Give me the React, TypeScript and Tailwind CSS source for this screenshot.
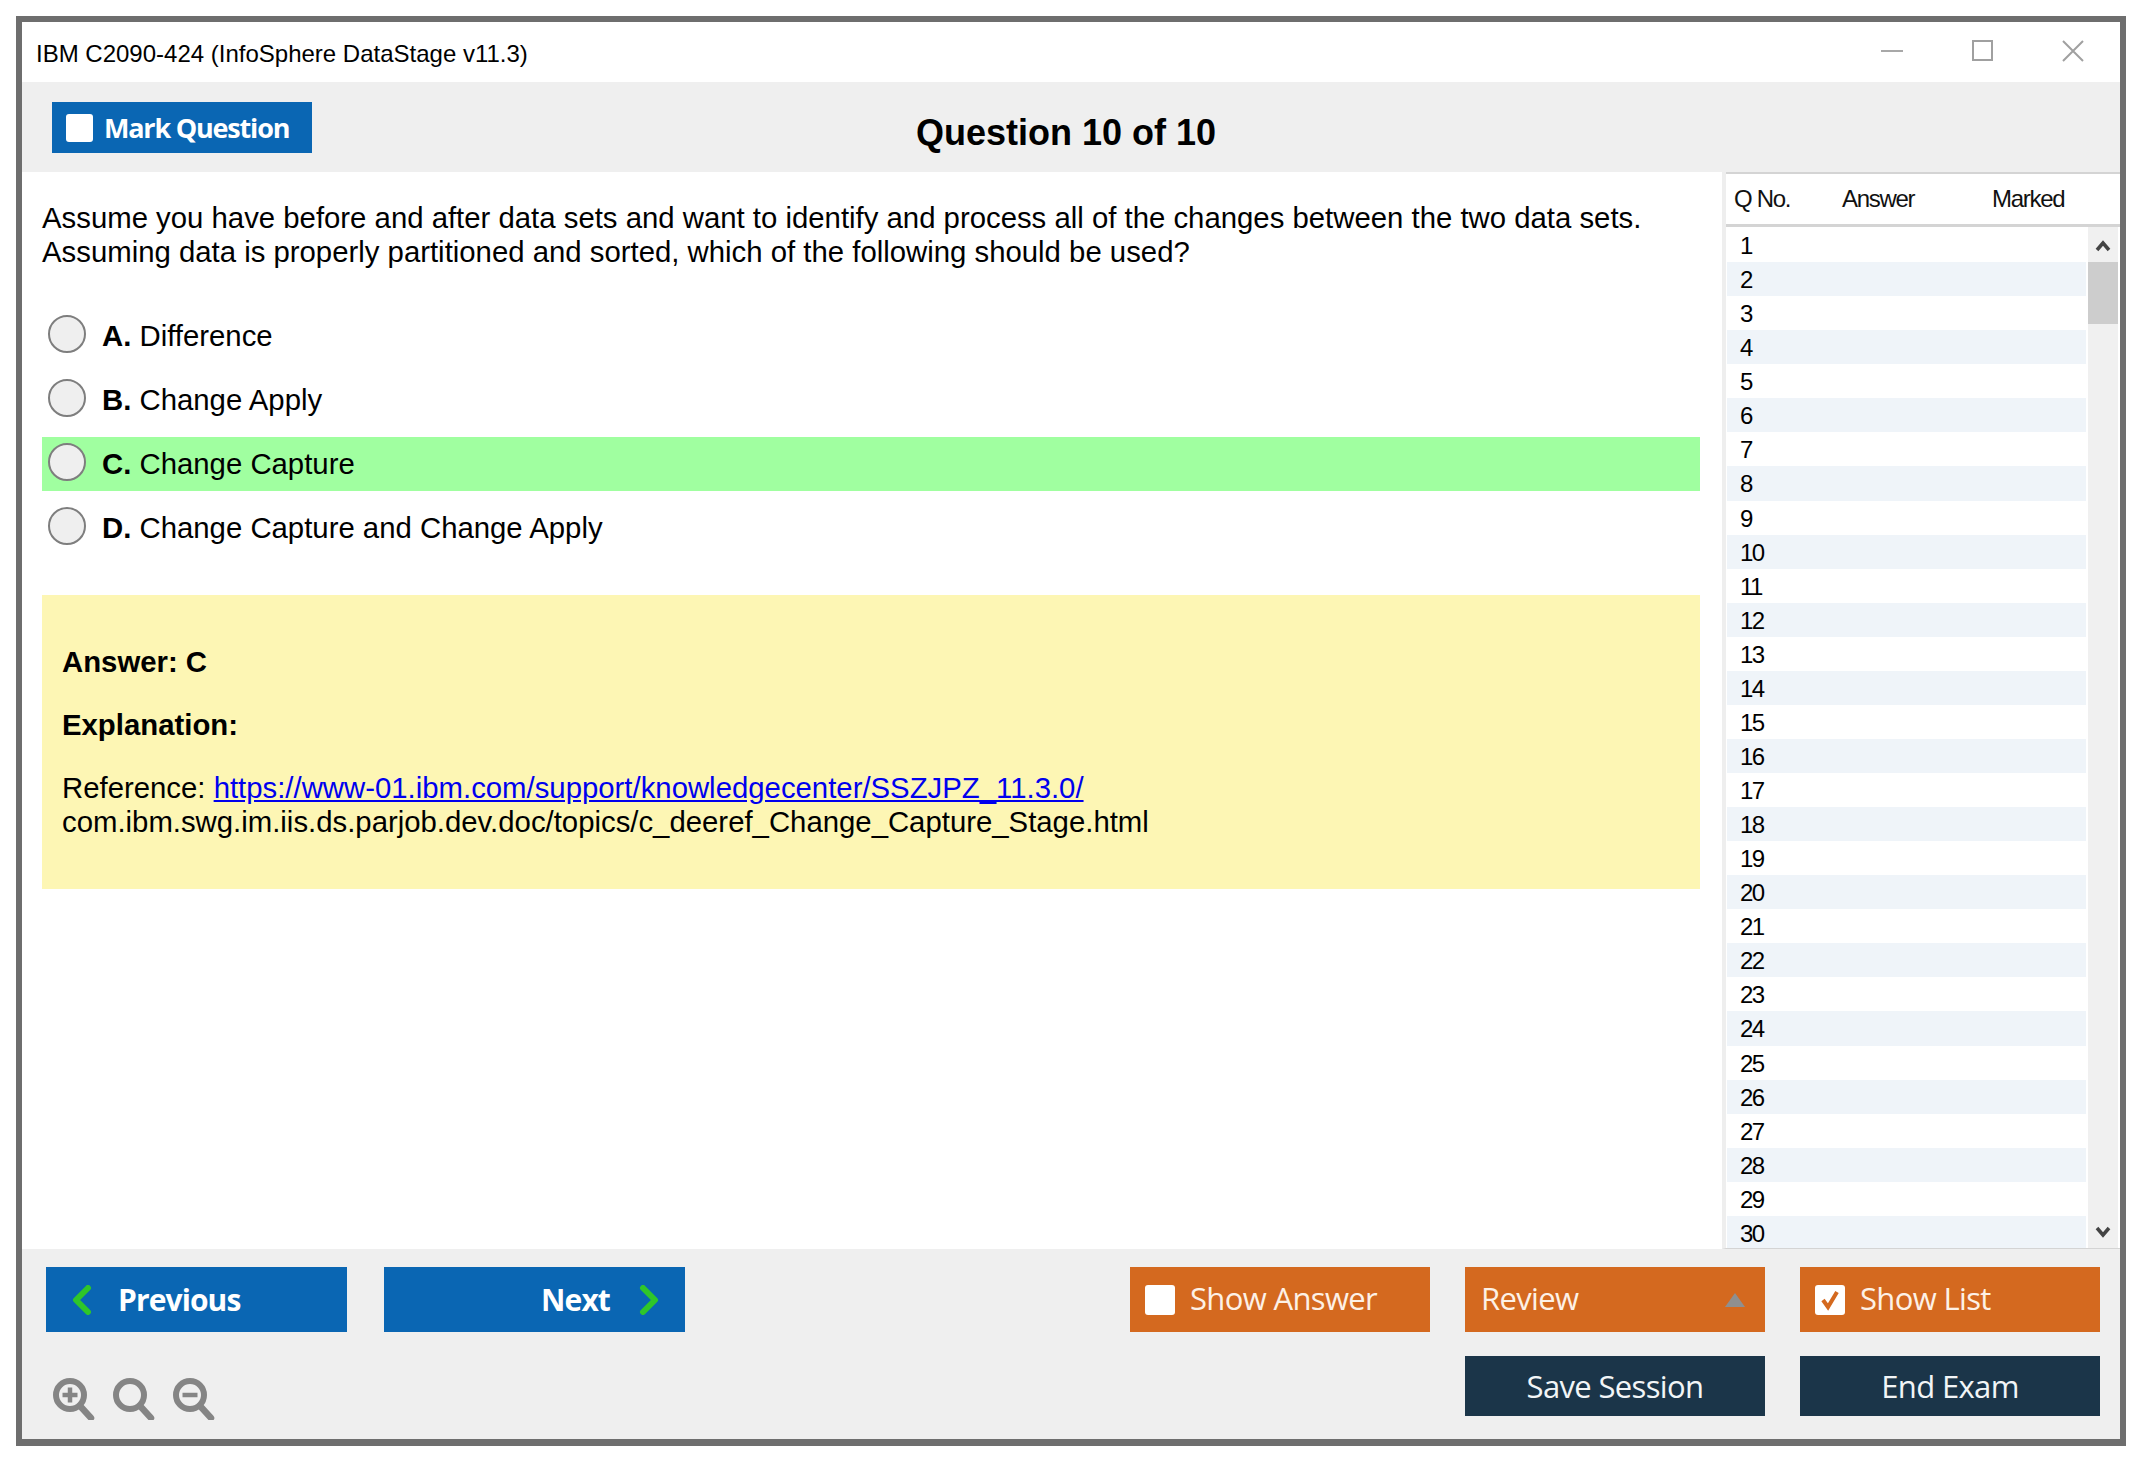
const rows = Array.from({ length: 30 }, (_, i) => i + 1)

const options = [
  { key: "A", text: "Difference" },
  { key: "B", text: "Change Apply" },
  { key: "C", text: "Change Capture", correct: true },
  { key: "D", text: "Change Capture and Change Apply" },
]

const btnFont = "font-['Open_Sans',sans-serif] text-[31px] tracking-[-0.65px]"
const navFont = "font-['Open_Sans',sans-serif] text-[30px] font-bold tracking-[-0.9px]"

const ZoomIcon = ({ kind }: { kind: "in" | "reset" | "out" }) => (
  <svg width="42" height="42" viewBox="0 0 42 42" fill="none" stroke="#858585">
    <circle cx="17" cy="17" r="14" strokeWidth="6" />
    <path d="M28 29 L38 40" strokeWidth="6.5" strokeLinecap="round" />
    {kind !== "reset" && <path d="M9.5 17 H24.5" strokeWidth="4.5" />}
    {kind === "in" && <path d="M17 9.5 V24.5" strokeWidth="4.5" />}
  </svg>
)

const Chevron = ({ dir }: { dir: "left" | "right" }) => (
  <svg width="20" height="30" viewBox="0 0 20 30" fill="none" stroke="#2fc62a" strokeWidth="6" strokeLinecap="round" strokeLinejoin="round">
    <path d={dir === "left" ? "M16 3 L4 15 L16 27" : "M4 3 L16 15 L4 27"} />
  </svg>
)

const OrangeButton = ({ children }: { children: React.ReactNode }) => (
  <div className={`flex h-[65px] w-[300px] items-center bg-[#d4691f] text-[#fdf1e6] ${btnFont}`}>{children}</div>
)

const CheckBox = ({ checked }: { checked?: boolean }) => (
  <span className="ml-[15px] flex h-[30px] w-[30px] items-center justify-center rounded-[3px] bg-white">
    {checked && (
      <svg width="22" height="22" viewBox="0 0 22 22" fill="none" stroke="#d4691f" strokeWidth="4">
        <path d="M4 11 L9 18 L18 3" />
      </svg>
    )}
  </span>
)

export default function App() {
  return (
    <div className="h-[1470px] w-[2150px] bg-white pl-[16px] pt-[16px] font-['Liberation_Sans',sans-serif] text-black">
      <div className="flex h-[1430px] w-[2110px] flex-col border-[6px] border-b-[7px] border-[#6e6e6e]">
        {/* title bar */}
        <div className="flex h-[60px] shrink-0 items-center justify-between bg-white pl-[14px] pr-[36px]">
          <span className="mt-[4px] text-[24px]">IBM C2090-424 (InfoSphere DataStage v11.3)</span>
          <div className="flex items-center gap-[69px] pb-[3px]">
            <svg width="22" height="20" viewBox="0 0 22 20" stroke="#a8a8a8" strokeWidth="2"><path d="M0 10 H22" /></svg>
            <svg width="21" height="21" viewBox="0 0 21 21" fill="none" stroke="#a0a0a0" strokeWidth="2"><rect x="1" y="1" width="19" height="19" /></svg>
            <svg width="22" height="22" viewBox="0 0 22 22" stroke="#a0a0a0" strokeWidth="2"><path d="M1 1 L21 21 M21 1 L1 21" /></svg>
          </div>
        </div>

        {/* toolbar */}
        <div className="relative flex h-[90px] shrink-0 items-center justify-center bg-[#efefef]">
          <div className="absolute left-[30px] top-[20px] flex h-[51px] w-[260px] items-center gap-[11px] bg-[#0a66b3] pl-[14px] font-['Open_Sans',sans-serif] text-[27px] font-bold tracking-[-1.2px] text-white">
            <span className="h-[28px] w-[27px] rounded-[3px] bg-white" />
            <span className="mt-[2px]">Mark Question</span>
          </div>
          <span className="ml-[-10px] mt-[11px] text-[36px] font-bold">Question 10 of 10</span>
        </div>

        {/* content */}
        <div className="flex min-h-0 flex-1">
          <div className="flex-1 pl-[20px] pr-[22px] pt-[29px]">
            <p className="text-[29.33px] leading-[34px]">
              Assume you have before and after data sets and want to identify and process all of the changes between the two data sets.
              <br />
              Assuming data is properly partitioned and sorted, which of the following should be used?
            </p>
            <div className="mt-[40px] flex flex-col gap-[10px]">
              {options.map((o) => (
                <div key={o.key} className={`flex h-[54px] items-center pl-[6px] text-[29.33px] ${o.correct ? "bg-[#a0ffa0]" : ""}`}>
                  <span className="mb-[4px] h-[38px] w-[38px] rounded-full border-2 border-[#7e7e7e] bg-[#efefef]" />
                  <span className="ml-[16px]">
                    <b>{o.key}.</b> {o.text}
                  </span>
                </div>
              ))}
            </div>
            <div className="mt-[40px] h-[294px] bg-[#fdf6b4] px-[20px] pt-[50px] text-[29.33px] leading-[34px]">
              <p className="font-bold">Answer: C</p>
              <p className="mt-[29px] font-bold">Explanation:</p>
              <p className="mt-[29px]">
                Reference: <span className="text-[#0000ee] underline">https://www-01.ibm.com/support/knowledgecenter/SSZJPZ_11.3.0/</span>
                <br />
                com.ibm.swg.im.iis.ds.parjob.dev.doc/topics/c_deeref_Change_Capture_Stage.html
              </p>
            </div>
          </div>

          {/* question list */}
          <div className="flex w-[398px] shrink-0 flex-col border-b border-l-[4px] border-[#eeeeee] border-b-[#d4d4d4]">
            <div className="flex h-[55px] shrink-0 items-center border-b-[3px] border-t-2 border-[#d4d4d4] pb-[1px] text-[24px] tracking-[-1.3px] text-[#111]">
              <span className="ml-[8px] w-[108px]">Q No.</span>
              <span className="w-[150px]">Answer</span>
              <span>Marked</span>
            </div>
            <div className="flex min-h-0 flex-1">
              <div className="min-w-0 flex-1 overflow-hidden pl-[1px] pr-[2px] pt-[1px]">
                {rows.map((n) => (
                  <div key={n} className={`h-[34.07px] pl-[13px] pt-[9px] text-[24px] leading-[18px] tracking-[-1.5px] ${n % 2 === 0 ? "bg-[#eff4f9]" : "bg-white"}`}>
                    {n}
                  </div>
                ))}
              </div>
              <div className="mr-[2px] flex w-[30px] shrink-0 flex-col bg-[#f0f0f0]">
                <div className="flex h-[35px] items-center justify-center pt-[3px]">
                  <svg width="16" height="12" viewBox="0 0 16 12" fill="none" stroke="#444" strokeWidth="3.5"><path d="M2 10 L8 3 L14 10" /></svg>
                </div>
                <div className="h-[62px] bg-[#cdcdcd]" />
                <div className="flex flex-1 items-end justify-center pb-[10px]">
                  <svg width="16" height="12" viewBox="0 0 16 12" fill="none" stroke="#444" strokeWidth="3.5"><path d="M2 2 L8 9 L14 2" /></svg>
                </div>
              </div>
            </div>
          </div>
        </div>

        {/* footer */}
        <div className="flex h-[190px] shrink-0 justify-between bg-[#efefef] pl-[24px] pr-[20px] pt-[18px]">
          <div className="flex flex-col">
            <div className="flex gap-[37px]">
              <div className={`flex h-[65px] w-[301px] items-center bg-[#0a66b3] pl-[26px] text-white ${navFont}`}>
                <Chevron dir="left" />
                <span className="ml-[26px]">Previous</span>
              </div>
              <div className={`flex h-[65px] w-[301px] items-center justify-end bg-[#0a66b3] pr-[26px] text-white ${navFont}`}>
                <span className="mr-[29px]">Next</span>
                <Chevron dir="right" />
              </div>
            </div>
            <div className="ml-[7px] mt-[46px] flex gap-[18px]">
              <ZoomIcon kind="in" />
              <ZoomIcon kind="reset" />
              <ZoomIcon kind="out" />
            </div>
          </div>
          <div className="flex flex-col items-end gap-[24px]">
            <div className="flex gap-[35px]">
              <OrangeButton>
                <CheckBox />
                <span className="mb-[2px] ml-[15px]">Show Answer</span>
              </OrangeButton>
              <OrangeButton>
                <span className="mb-[2px] ml-[16px] flex-1">Review</span>
                <svg className="mr-[20px]" width="20" height="16" viewBox="0 0 20 16" fill="#8f8f8f"><path d="M10 1 L20 15 H0 Z" /></svg>
              </OrangeButton>
              <OrangeButton>
                <CheckBox checked />
                <span className="mb-[2px] ml-[15px]">Show List</span>
              </OrangeButton>
            </div>
            <div className="flex gap-[35px]">
              <div className={`flex h-[60px] w-[300px] items-center justify-center bg-[#1b3549] text-[#f2f5f7] ${btnFont}`}>Save Session</div>
              <div className={`flex h-[60px] w-[300px] items-center justify-center bg-[#1b3549] text-[#f2f5f7] ${btnFont}`}>End Exam</div>
            </div>
          </div>
        </div>
      </div>
    </div>
  )
}
